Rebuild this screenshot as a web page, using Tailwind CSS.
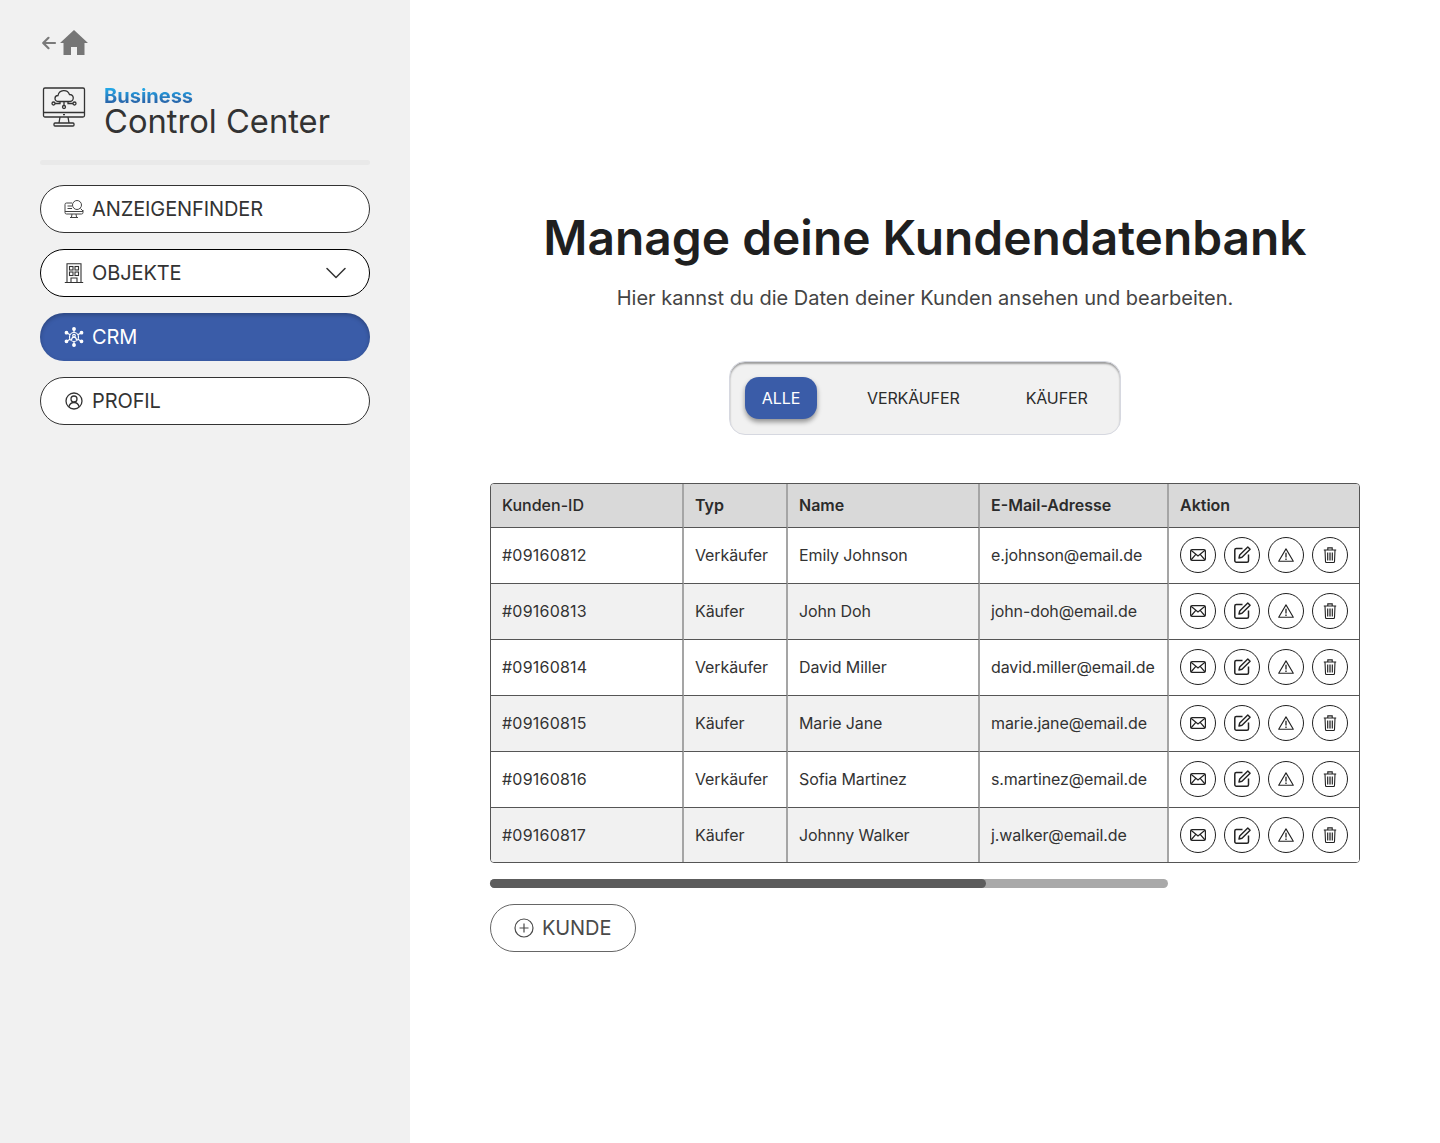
<!DOCTYPE html>
<html lang="de">
<head>
<meta charset="utf-8">
<title>Control Center</title>
<script src="https://cdn.jsdelivr.net/npm/@tailwindcss/browser@4"></script>
</head>
<body class="font-['Inter',sans-serif] bg-white text-[#2b2b2b]">
<svg width="0" height="0" class="absolute">
  <defs>
    <symbol id="mail" viewBox="0 0 16 12"><rect x="0.6" y="0.6" width="14.8" height="10.800" rx="1.500" fill="none" stroke="currentColor" stroke-width="1.200"/><path d="M1 1.200 8 7l7-5.800M1 11 5.800 5.300M15 11 10.200 5.300" fill="none" stroke="currentColor" stroke-width="1.200"/></symbol>
    <symbol id="edit" viewBox="0 0 17 17"><path d="M8.500 2.500H2.300A1.500 1.500 0 0 0 .8 4v10.700a1.500 1.500 0 0 0 1.500 1.500H13a1.500 1.500 0 0 0 1.500-1.500V8.500" fill="none" stroke="currentColor" stroke-width="1.500"/><path d="M13.800.9 16.100 3.200 8 11.300 5 12 5.700 9Z" fill="none" stroke="currentColor" stroke-width="1.400" stroke-linejoin="round"/></symbol>
    <symbol id="warn" viewBox="0 0 16 14"><path d="M8 .9 15.300 13.300H.7Z" fill="none" stroke="currentColor" stroke-width="1.100" stroke-linejoin="round"/><path d="M8 4.800v4.700M8 10.500v1.400" stroke="currentColor" stroke-width="1.300"/></symbol>
    <symbol id="trash" viewBox="0 0 14 16"><path d="M.8 3h12.400M4.800 2.800V.9h4.400v1.900" fill="none" stroke="currentColor" stroke-width="1.100"/><path d="M2 3l.5 11.500a1 1 0 0 0 1 1h7a1 1 0 0 0 1-1L12 3" fill="none" stroke="currentColor" stroke-width="1.100"/><path d="M4.500 5.500v8M6.200 5.500v8M7.800 5.500v8M9.500 5.500v8" stroke="currentColor" stroke-width=".9"/></symbol>
  </defs>
</svg>
<div class="flex min-h-[1143px]">
  <aside class="w-[410px] shrink-0 bg-[#f1f1f1] px-10">
    <div class="flex items-center pt-[30px] h-[56px]">
      <svg class="w-[18px] h-[14px] -mt-[1px] text-[#7a7a7a]" viewBox="0 0 18 14" fill="none" stroke="currentColor" stroke-width="2.200" stroke-linecap="round" stroke-linejoin="round"><path d="M15 7H3.500M8.500 1.800 3.200 7l5.300 5.200"/></svg>
      <svg class="w-[28px] h-[25px] ml-[2px] -mt-[1px] text-[#767676]" viewBox="0 0 28 25" fill="currentColor"><path d="M14 0 28 13h-3.500v12H17v-8h-6v8H3.500V13H0Z"/></svg>
    </div>
    <div class="flex items-center mt-[28px] h-[53px]">
      <svg class="w-[44px] h-[42px] ml-[2px] self-start mt-[2px] text-[#333]" viewBox="0 0 44 42" fill="none" stroke="currentColor" stroke-width="1.300">
        <rect x="1.500" y="2" width="41" height="29" rx="1.500"/>
        <path d="M1.500 26.500h41M21 28.700h2M18 31l-1 6M26 31l1 6"/>
        <rect x="12" y="37" width="20" height="3" rx="1"/>
        <path d="M16 15.500a3 3 0 0 1 0-6 6 6 0 0 1 11.500-1 3.500 3.500 0 0 1 .5 7Z"/>
        <path d="M22 15.500v4M18 15.500v2h-5M26 15.500v2h5"/>
        <circle cx="22" cy="21" r="1.500"/><circle cx="11.500" cy="17.500" r="1.500"/><circle cx="32.500" cy="17.500" r="1.500"/>
      </svg>
      <div class="ml-[18px] flex flex-col">
        <span class="text-[20px] leading-[20px] font-bold bg-gradient-to-b from-[#1fb4f2] to-[#27559b] bg-clip-text text-transparent self-start">Business</span>
        <span class="text-[32.700px] leading-[30px] text-[#333]">Control Center</span>
      </div>
    </div>
    <div class="h-[5px] mt-[23px] bg-[#e9e9e9] rounded-full"></div>
    <nav class="mt-5 flex flex-col gap-4 text-[20px] tracking-[-0.1px] text-[#333]">
      <a class="h-12 rounded-full border border-[#333] bg-white flex items-center pl-[23px]">
        <svg class="w-5 h-5 mr-2" viewBox="0 0 20 20" fill="none" stroke="#444" stroke-width="1"><path d="M8 4H2.500A1.500 1.500 0 0 0 1 5.500v8A1.500 1.500 0 0 0 2.500 15h15a1.500 1.500 0 0 0 1.500-1.500V11M1 12.500h18M8 15l-.5 3M12 15l.5 3M6 18.500h8M3.500 7H8M3.500 9.500H8"/><circle cx="13" cy="6" r="4.500"/><path d="m16.500 9.500 2.500 2.500"/></svg>
        <span>ANZEIGENFINDER</span>
      </a>
      <a class="h-12 rounded-full border border-black bg-white flex items-center pl-[23px] pr-[23px]">
        <svg class="w-5 h-5 mr-2" viewBox="0 0 20 20" fill="none" stroke="#333" stroke-width="1.100"><path d="M3 19.500V.8h14v18.700M.8 19.500h18.400"/><rect x="5.500" y="3.500" width="3.500" height="3.500"/><rect x="11" y="3.500" width="3.500" height="3.500"/><rect x="5.500" y="9" width="3.500" height="3.500"/><rect x="11" y="9" width="3.500" height="3.500"/><path d="M7 19.500v-4.500h6v4.500"/></svg>
        <span>OBJEKTE</span>
        <svg class="ml-auto w-[20px] h-[12px]" viewBox="0 0 20 12" fill="none" stroke="#333" stroke-width="1.500" stroke-linecap="round" stroke-linejoin="round"><path d="m1 1.500 9 9 9-9"/></svg>
      </a>
      <a class="h-12 rounded-full bg-[#3a5ca8] text-white flex items-center pl-[24px] shadow-[inset_0_2px_4px_rgba(0,0,0,0.25)]">
        <svg class="w-5 h-5 mr-2" viewBox="0 0 20 20" fill="none" stroke="#fff" stroke-width="1.200"><circle cx="10" cy="10" r="4.500"/><circle cx="10" cy="8.700" r="1.300"/><path d="M7.500 13c.3-2 1.200-2.800 2.500-2.800s2.200.8 2.500 2.800M10 5.500V3M10 14.500V17M6.100 7.800 3.500 6.300M13.900 7.800l2.600-1.500M6.100 12.200l-2.600 1.500M13.900 12.200l2.600 1.500"/><circle cx="10" cy="2" r="1.300" fill="#fff"/><circle cx="10" cy="18" r="1.300" fill="#fff"/><circle cx="2.500" cy="5.700" r="1.300" fill="#fff"/><circle cx="17.500" cy="5.700" r="1.300" fill="#fff"/><circle cx="2.500" cy="14.300" r="1.300" fill="#fff"/><circle cx="17.500" cy="14.300" r="1.300" fill="#fff"/></svg>
        <span>CRM</span>
      </a>
      <a class="h-12 rounded-full border border-[#333] bg-white flex items-center pl-[23px]">
        <svg class="w-5 h-5 mr-2" viewBox="0 0 20 20" fill="none" stroke="#333" stroke-width="1.300"><circle cx="10" cy="10" r="8"/><circle cx="10" cy="8" r="3"/><path d="M4.800 16c.8-3 2.800-4.500 5.200-4.500s4.400 1.500 5.200 4.500"/></svg>
        <span>PROFIL</span>
      </a>
    </nav>
  </aside>
  <main class="flex-1 px-20 flex flex-col">
    <h1 class="mt-[209px] text-center text-[47.900px] leading-[58px] font-semibold text-[#1f1f1f]">Manage deine Kundendatenbank</h1>
    <p class="mt-[17px] text-center text-[20px] leading-[28px] text-[#444]">Hier kannst du die Daten deiner Kunden ansehen und bearbeiten.</p>
    <div class="mt-[49px] self-center w-[392px] h-[74px] rounded-2xl border border-[#d6d8e0] bg-[#f1f1f1] shadow-[inset_0_2px_2px_rgba(0,0,0,0.35)] flex items-center pl-[15px] text-[16px] tracking-[-0.12px]">
      <span class="w-[72px] h-[42px] rounded-[14px] bg-[#3a5ca8] text-white flex items-center justify-center shadow-[0_3px_5px_rgba(0,0,0,0.4)]">ALLE</span>
      <span class="ml-[50px] text-[#2b2b2b]">VERKÄUFER</span>
      <span class="ml-[66px] text-[#2b2b2b]">KÄUFER</span>
    </div>
    <div class="mt-[48px] rounded-[4px] border border-[#555] overflow-hidden">
      <table class="w-full table-fixed border-separate border-spacing-0 text-[16px] tracking-[-0.11px] text-[#333]">
        <colgroup><col class="w-[193px]"><col class="w-[104px]"><col class="w-[192px]"><col class="w-[189px]"><col></colgroup>
        <thead>
          <tr class="bg-[#d9d9d9] h-[43px] text-left text-[#2b2b2b] tracking-normal">
            <th class="font-medium pl-[11px] pb-[2px] border-r-2 border-[#a5a5a5]">Kunden-ID</th>
            <th class="font-semibold pl-[11px] pb-[2px] border-r-2 border-[#a5a5a5]">Typ</th>
            <th class="font-semibold pl-[11px] pb-[2px] border-r-2 border-[#a5a5a5]">Name</th>
            <th class="font-semibold pl-[11px] pb-[2px] border-r-2 border-[#a5a5a5]">E-Mail-Adresse</th>
            <th class="font-semibold pl-[11px] pb-[2px]">Aktion</th>
          </tr>
        </thead>
        <tbody>
          <tr class="h-[56px] bg-white">
            <td class="pl-[11px] pb-[2px] tracking-[0.22px] border-t border-r-2 border-t-[#555] border-r-[#a5a5a5]">#09160812</td><td class="pl-[11px] pb-[2px] border-t border-r-2 border-t-[#555] border-r-[#a5a5a5]">Verkäufer</td><td class="pl-[11px] pb-[2px] border-t border-r-2 border-t-[#555] border-r-[#a5a5a5]">Emily Johnson</td><td class="pl-[11px] pb-[2px] border-t border-r-2 border-t-[#555] border-r-[#a5a5a5]">e.johnson@email.de</td>
            <td class="pl-[11px] pb-[2px] border-t border-t-[#555]"><div class="flex gap-2 text-[#222]">
              <span class="w-9 h-9 rounded-full border border-[#222] flex items-center justify-center"><svg class="w-4 h-3"><use href="#mail"/></svg></span>
              <span class="w-9 h-9 rounded-full border border-[#222] flex items-center justify-center"><svg class="w-[17px] h-[17px]"><use href="#edit"/></svg></span>
              <span class="w-9 h-9 rounded-full border border-[#222] flex items-center justify-center"><svg class="w-4 h-[14px]"><use href="#warn"/></svg></span>
              <span class="w-9 h-9 rounded-full border border-[#222] flex items-center justify-center"><svg class="w-[14px] h-4"><use href="#trash"/></svg></span>
            </div></td>
          </tr>
          <tr class="h-[56px] bg-[#f1f1f1]">
            <td class="pl-[11px] pb-[2px] tracking-[0.22px] border-t border-r-2 border-t-[#555] border-r-[#a5a5a5]">#09160813</td><td class="pl-[11px] pb-[2px] border-t border-r-2 border-t-[#555] border-r-[#a5a5a5]">Käufer</td><td class="pl-[11px] pb-[2px] border-t border-r-2 border-t-[#555] border-r-[#a5a5a5]">John Doh</td><td class="pl-[11px] pb-[2px] border-t border-r-2 border-t-[#555] border-r-[#a5a5a5]">john-doh@email.de</td>
            <td class="pl-[11px] pb-[2px] border-t border-t-[#555] bg-white"><div class="flex gap-2 text-[#222]">
              <span class="w-9 h-9 rounded-full border border-[#222] flex items-center justify-center"><svg class="w-4 h-3"><use href="#mail"/></svg></span>
              <span class="w-9 h-9 rounded-full border border-[#222] flex items-center justify-center"><svg class="w-[17px] h-[17px]"><use href="#edit"/></svg></span>
              <span class="w-9 h-9 rounded-full border border-[#222] flex items-center justify-center"><svg class="w-4 h-[14px]"><use href="#warn"/></svg></span>
              <span class="w-9 h-9 rounded-full border border-[#222] flex items-center justify-center"><svg class="w-[14px] h-4"><use href="#trash"/></svg></span>
            </div></td>
          </tr>
          <tr class="h-[56px] bg-white">
            <td class="pl-[11px] pb-[2px] tracking-[0.22px] border-t border-r-2 border-t-[#555] border-r-[#a5a5a5]">#09160814</td><td class="pl-[11px] pb-[2px] border-t border-r-2 border-t-[#555] border-r-[#a5a5a5]">Verkäufer</td><td class="pl-[11px] pb-[2px] border-t border-r-2 border-t-[#555] border-r-[#a5a5a5]">David Miller</td><td class="pl-[11px] pb-[2px] border-t border-r-2 border-t-[#555] border-r-[#a5a5a5]">david.miller@email.de</td>
            <td class="pl-[11px] pb-[2px] border-t border-t-[#555]"><div class="flex gap-2 text-[#222]">
              <span class="w-9 h-9 rounded-full border border-[#222] flex items-center justify-center"><svg class="w-4 h-3"><use href="#mail"/></svg></span>
              <span class="w-9 h-9 rounded-full border border-[#222] flex items-center justify-center"><svg class="w-[17px] h-[17px]"><use href="#edit"/></svg></span>
              <span class="w-9 h-9 rounded-full border border-[#222] flex items-center justify-center"><svg class="w-4 h-[14px]"><use href="#warn"/></svg></span>
              <span class="w-9 h-9 rounded-full border border-[#222] flex items-center justify-center"><svg class="w-[14px] h-4"><use href="#trash"/></svg></span>
            </div></td>
          </tr>
          <tr class="h-[56px] bg-[#f1f1f1]">
            <td class="pl-[11px] pb-[2px] tracking-[0.22px] border-t border-r-2 border-t-[#555] border-r-[#a5a5a5]">#09160815</td><td class="pl-[11px] pb-[2px] border-t border-r-2 border-t-[#555] border-r-[#a5a5a5]">Käufer</td><td class="pl-[11px] pb-[2px] border-t border-r-2 border-t-[#555] border-r-[#a5a5a5]">Marie Jane</td><td class="pl-[11px] pb-[2px] border-t border-r-2 border-t-[#555] border-r-[#a5a5a5]">marie.jane@email.de</td>
            <td class="pl-[11px] pb-[2px] border-t border-t-[#555] bg-white"><div class="flex gap-2 text-[#222]">
              <span class="w-9 h-9 rounded-full border border-[#222] flex items-center justify-center"><svg class="w-4 h-3"><use href="#mail"/></svg></span>
              <span class="w-9 h-9 rounded-full border border-[#222] flex items-center justify-center"><svg class="w-[17px] h-[17px]"><use href="#edit"/></svg></span>
              <span class="w-9 h-9 rounded-full border border-[#222] flex items-center justify-center"><svg class="w-4 h-[14px]"><use href="#warn"/></svg></span>
              <span class="w-9 h-9 rounded-full border border-[#222] flex items-center justify-center"><svg class="w-[14px] h-4"><use href="#trash"/></svg></span>
            </div></td>
          </tr>
          <tr class="h-[56px] bg-white">
            <td class="pl-[11px] pb-[2px] tracking-[0.22px] border-t border-r-2 border-t-[#555] border-r-[#a5a5a5]">#09160816</td><td class="pl-[11px] pb-[2px] border-t border-r-2 border-t-[#555] border-r-[#a5a5a5]">Verkäufer</td><td class="pl-[11px] pb-[2px] border-t border-r-2 border-t-[#555] border-r-[#a5a5a5]">Sofia Martinez</td><td class="pl-[11px] pb-[2px] border-t border-r-2 border-t-[#555] border-r-[#a5a5a5]">s.martinez@email.de</td>
            <td class="pl-[11px] pb-[2px] border-t border-t-[#555]"><div class="flex gap-2 text-[#222]">
              <span class="w-9 h-9 rounded-full border border-[#222] flex items-center justify-center"><svg class="w-4 h-3"><use href="#mail"/></svg></span>
              <span class="w-9 h-9 rounded-full border border-[#222] flex items-center justify-center"><svg class="w-[17px] h-[17px]"><use href="#edit"/></svg></span>
              <span class="w-9 h-9 rounded-full border border-[#222] flex items-center justify-center"><svg class="w-4 h-[14px]"><use href="#warn"/></svg></span>
              <span class="w-9 h-9 rounded-full border border-[#222] flex items-center justify-center"><svg class="w-[14px] h-4"><use href="#trash"/></svg></span>
            </div></td>
          </tr>
          <tr class="h-[55px] bg-[#f1f1f1]">
            <td class="pl-[11px] tracking-[0.22px] border-t border-r-2 border-t-[#555] border-r-[#a5a5a5]">#09160817</td><td class="pl-[11px] border-t border-r-2 border-t-[#555] border-r-[#a5a5a5]">Käufer</td><td class="pl-[11px] border-t border-r-2 border-t-[#555] border-r-[#a5a5a5]">Johnny Walker</td><td class="pl-[11px] border-t border-r-2 border-t-[#555] border-r-[#a5a5a5]">j.walker@email.de</td>
            <td class="pl-[11px] border-t border-t-[#555] bg-white"><div class="flex gap-2 text-[#222]">
              <span class="w-9 h-9 rounded-full border border-[#222] flex items-center justify-center"><svg class="w-4 h-3"><use href="#mail"/></svg></span>
              <span class="w-9 h-9 rounded-full border border-[#222] flex items-center justify-center"><svg class="w-[17px] h-[17px]"><use href="#edit"/></svg></span>
              <span class="w-9 h-9 rounded-full border border-[#222] flex items-center justify-center"><svg class="w-4 h-[14px]"><use href="#warn"/></svg></span>
              <span class="w-9 h-9 rounded-full border border-[#222] flex items-center justify-center"><svg class="w-[14px] h-4"><use href="#trash"/></svg></span>
            </div></td>
          </tr>
        </tbody>
      </table>
    </div>
    <div class="mt-4 w-[678px] h-[9px] rounded-full bg-[#a9a9a9]">
      <div class="w-[496px] h-full rounded-full bg-[#5c5c5c]"></div>
    </div>
    <button class="mt-4 self-start w-[146px] h-12 rounded-full border border-[#666] flex items-center pl-[23px] text-[20px] tracking-[-0.1px] text-[#4a4a4a]">
      <svg class="w-5 h-5 mr-2" viewBox="0 0 20 20" fill="none" stroke="#4a4a4a" stroke-width="1.200"><circle cx="10" cy="10" r="9"/><path d="M10 5.500v9M5.500 10h9"/></svg>
      <span>KUNDE</span>
    </button>
  </main>
</div>
</body>
</html>
